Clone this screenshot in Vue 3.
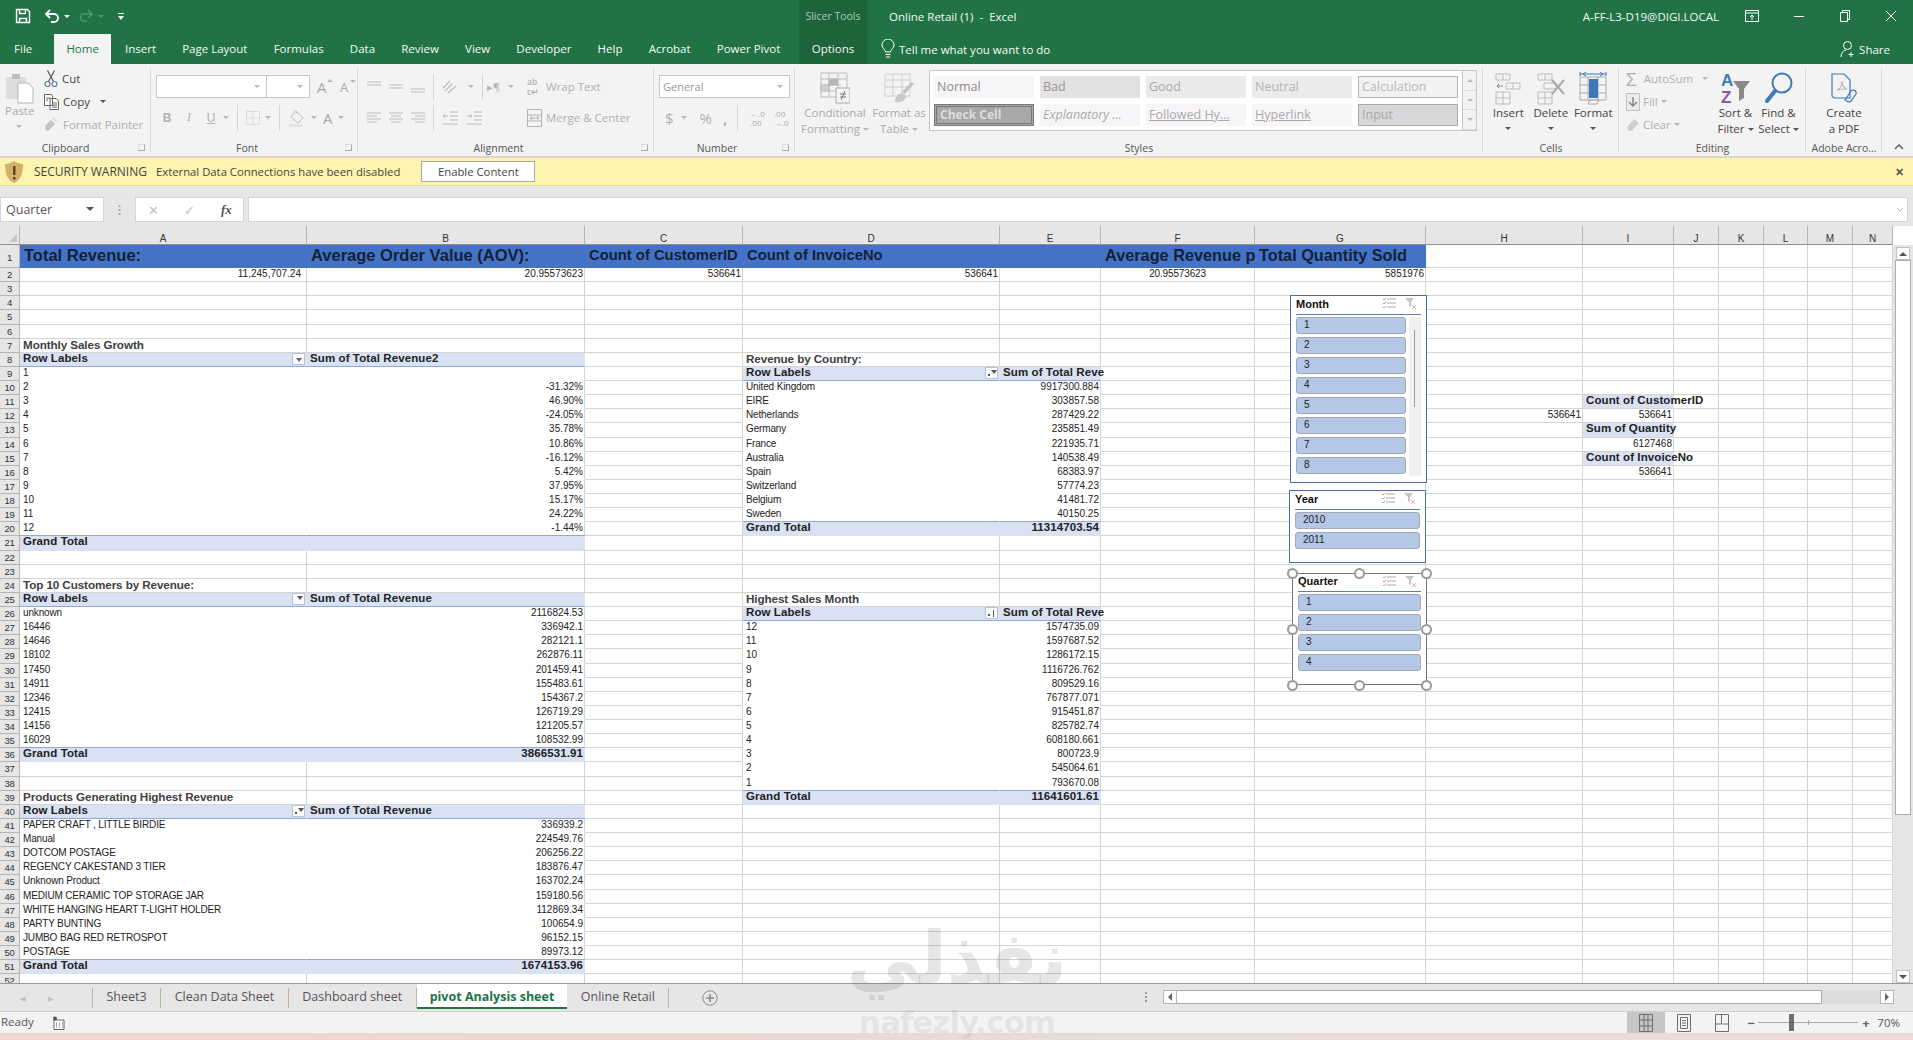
<template>
  <div class="app">
    <header class="head">
      <div class="title-row">
        <div class="qat">
          <svg class="qat-save" width="16" height="16" viewBox="0 0 16 16" fill="none" stroke="#fff" stroke-width="1.4"><path d="M1.500 1.500h11l2 2v11h-13zM4.500 1.500v4h6v-4M4.500 14.500v-4h7v4"/></svg>
          <svg class="qat-undo" width="16" height="16" viewBox="0 0 16 16" fill="none" stroke="#fff" stroke-width="1.8"><path d="M6 2 2 6l4 4M2.500 6H10a3.500 3.500 0 0 1 0 8H7"/></svg>
          <i class="tri white"></i>
          <svg class="qat-redo" width="16" height="16" viewBox="0 0 16 16" fill="none" stroke="#4f9570" stroke-width="1.6"><path d="m10 2 4 4-4 4M13.500 6H6a3.500 3.500 0 0 0 0 7h3"/></svg>
          <i class="tri dim"></i>
          <svg class="qat-more" width="8" height="9" viewBox="0 0 8 9" fill="#fff"><path d="M1 1h6v1H1zM1 4h6L4 8z"/></svg>
        </div>
        <div class="ctx-title">Slicer Tools</div>
        <div class="doc-title">Online Retail (1)&nbsp; -&nbsp; Excel</div>
        <div class="user">A-FF-L3-D19@DIGI.LOCAL</div>
        <div class="win-btns">
          <svg width="14" height="14" viewBox="0 0 14 14" fill="none" stroke="#fff"><path d="M.5 1.500h13v11H.5zM.5 4h13M7 11V6M5 8l2-2 2 2"/></svg>
          <svg width="12" height="14" viewBox="0 0 12 14" stroke="#fff"><path d="M1 7.500h10"/></svg>
          <svg width="12" height="14" viewBox="0 0 12 14" fill="none" stroke="#fff"><path d="M1.500 3.500h7v9h-7zM3.500 3.500v-2h7v9h-2"/></svg>
          <svg width="12" height="14" viewBox="0 0 12 14" stroke="#fff"><path d="m1 2 10 10M11 2 1 12"/></svg>
        </div>
      </div>
      <div class="tab-row">
        <nav class="tabs">
          <span v-for="t in ribbonTabs" :key="t" class="tab" :class="{ on: t === 'Home' }">{{ t }}</span>
        </nav>
        <span class="ctx-tab">Options</span>
        <div class="tell">
          <svg width="14" height="20" viewBox="0 0 14 20" fill="none" stroke="#fff"><path d="M4.500 13C4 10 1 9 1 6a6 6 0 0 1 12 0c0 3-3 4-3.500 7zM4.500 15.500h5M5 18h4"/></svg>
          <span>Tell me what you want to do</span>
        </div>
        <div class="share">
          <svg width="16" height="18" viewBox="0 0 16 18" fill="none" stroke="#fff"><circle cx="7.500" cy="5.500" r="4"/><path d="M1 17c0-4 2-6.500 5-7M11 12v5M8.500 14.500h5"/></svg>
          <span>Share</span>
        </div>
      </div>
    </header>

    <section class="ribbon">
      <div class="group g-clip">
        <div class="body clip-body">
          <div class="paste">
            <svg width="30" height="32" viewBox="0 0 30 32" fill="none"><path d="M1 5h20v22H1z" fill="#dcdcdc"/><path d="M7 2h8v5H7z" fill="#bdbdbd"/><path d="M13 11h10l5 5v15H13z" fill="#fff" stroke="#b5b5b5"/></svg>
            <span>Paste</span>
            <i class="tri soft"></i>
          </div>
          <div class="clip-stack">
            <div class="small">
              <svg width="14" height="18" viewBox="0 0 14 18" fill="none" stroke="#5f7ea8" stroke-width="1.200"><circle cx="3.500" cy="14" r="2.500"/><circle cx="10.500" cy="14" r="2.500"/><path stroke="#555" d="m4.500 11.500 6-11M9.500 11.500l-6-11"/></svg>
              <span>Cut</span>
            </div>
            <div class="small">
              <svg width="15" height="16" viewBox="0 0 15 16" fill="#fff" stroke="#666"><path d="M.5.500h7l1 2v9h-8zM6 4.500h6l2.500 2.500v8.500H6zM2 4h4M2 6h2M8 9h5M8 11h5M8 13h5"/></svg>
              <span>Copy</span><i class="tri dark ml6"></i>
            </div>
            <div class="small off">
              <svg width="15" height="15" viewBox="0 0 15 15" fill="#c4c4c4"><path d="m1 9 6-6 4 4-6 6-3 1z"/><path d="m8 2 2-2 1 2 3 1-2 2z" fill="#dedede"/></svg>
              <span>Format Painter</span>
            </div>
          </div>
        </div>
        <div class="label lb-clip">Clipboard<i class="launch"></i></div>
      </div>

      <div class="group g-font">
        <div class="body rows">
          <div class="line">
            <div class="combo font-name"><i class="tri soft"></i></div>
            <div class="combo font-size"><i class="tri soft"></i></div>
            <span class="grow-a big">A<i class="tri soft up"></i></span>
            <span class="grow-a">A<i class="tri soft"></i></span>
          </div>
          <div class="line l2">
            <b class="fmt">B</b>
            <em class="fmt it">I</em>
            <u class="fmt und">U</u>
            <i class="tri soft"></i>
            <i class="sep"></i>
            <svg width="14" height="14" viewBox="0 0 14 14" fill="none" stroke="#c6c6c6" stroke-dasharray="1 1"><path d="M.5.500h13v13H.5zM.5 7h13M7 .5v13"/></svg>
            <i class="tri soft"></i>
            <i class="sep"></i>
            <svg width="18" height="18" viewBox="0 0 18 18" fill="none" stroke="#bbb"><path d="m8 2 7 7-5 5-7-6zM6 1l3 3"/><path d="M1 15h14v3H1z" fill="#e4e4e4" stroke="none"/></svg>
            <i class="tri soft"></i>
            <span class="font-color">A</span>
            <i class="tri soft"></i>
          </div>
        </div>
        <div class="label lb">Font<i class="launch"></i></div>
      </div>

      <div class="group g-align">
        <div class="body align-body">
          <div class="align-grid">
            <svg v-for="a in alignTop" :key="a" width="14" height="14" viewBox="0 0 14 14" stroke="#bdbdbd"><path :d="a"/></svg>
            <i class="sep"></i>
            <svg width="18" height="16" viewBox="0 0 18 16" fill="none" stroke="#bdbdbd" stroke-width="1.200"><path d="M1 9 8 2M3 12l7-7M6 14 14 7"/></svg>
            <i class="tri soft"></i>
            <i class="sep"></i>
            <span class="para">▸¶</span>
            <i class="tri soft"></i>
          </div>
          <div class="align-grid a2">
            <svg v-for="a in alignBottom" :key="a" width="14" height="14" viewBox="0 0 14 14" stroke="#bdbdbd"><path :d="a"/></svg>
            <i class="sep"></i>
            <svg width="16" height="14" viewBox="0 0 16 14" fill="none" stroke="#bdbdbd"><path d="M8 1h8M8 5h8M8 9h8M1 13h15M6 5H1l2-2M1 5l2 2"/></svg>
            <svg width="16" height="14" viewBox="0 0 16 14" fill="none" stroke="#bdbdbd"><path d="M8 1h8M8 5h8M8 9h8M1 13h15M1 5h5L4 3M6 5 4 7"/></svg>
          </div>
          <div class="wrap-col">
            <div class="small off">
              <span class="ab">ab<br>c↵</span>
              <span>Wrap Text</span>
            </div>
            <div class="small off merge">
              <svg width="15" height="18" viewBox="0 0 15 18" fill="none" stroke="#b5b5b5"><path d="M.5.500h14v17H.5zM.5 6h14M.5 12h14M3 9h9M3 9l2-2M3 9l2 2M12 9l-2-2M12 9l-2 2"/></svg>
              <span>Merge &amp; Center</span>
            </div>
          </div>
        </div>
        <div class="label lb">Alignment<i class="launch"></i></div>
      </div>

      <div class="group g-num">
        <div class="body rows num-rows">
          <div class="line"><div class="combo general">General<i class="tri soft"></i></div></div>
          <div class="line l2 num-line">
            <span class="cur">$</span><i class="tri soft"></i>
            <span class="cur pct">%</span>
            <span class="cur cm">,</span>
            <i class="sep"></i>
            <span class="dec">←.0<br>.00</span>
            <span class="dec">.00<br>→.0</span>
          </div>
        </div>
        <div class="label lb">Number<i class="launch"></i></div>
      </div>

      <div class="group g-styles">
        <div class="body styles-body">
          <div class="big-btn off w64">
            <svg width="30" height="32" viewBox="0 0 30 32" fill="none" stroke="#bdbdbd"><path d="M1 1h26v24H1zM1 7h26M1 13h20M1 19h16M9 1v24M18 1v18" /><path d="M9 7h9v6H9z" fill="#b5b5b5"/><path d="M1 13h8v6H1z" fill="#d0d0d0"/><path d="M16 16h14v15H16z" fill="#f4f4f4" stroke="#aaa"/><path d="M20 22h6M20 25h6M25 19l-4 9" stroke="#777"/></svg>
            <span>Conditional<br>Formatting<i class="tri soft in"></i></span>
          </div>
          <div class="big-btn off w64">
            <svg width="32" height="32" viewBox="0 0 32 32" fill="none" stroke="#cfcfcf"><path d="M2 2h25v22H2zM2 8h25M2 15h25M10 2v22M19 2v22"/><path d="m31 12-9 10-3-2 9-10z" fill="#c4c4c4" stroke="none"/><path d="M12 30c0-6 4-9 8-9l3 3c-1 5-5 7-11 6z" fill="#c8c8c8" stroke="none"/></svg>
            <span>Format as<br>Table<i class="tri soft in"></i></span>
          </div>
          <div class="gallery">
            <div class="gallery-cells">
              <span v-for="s in cellStyles" :key="s.t" class="cs" :class="s.c">{{ s.t }}</span>
            </div>
            <div class="gallery-scroll">
              <span><i class="tri soft up"></i></span>
              <span><i class="tri soft"></i></span>
              <span><i class="tri soft"></i></span>
            </div>
          </div>
        </div>
        <div class="label">Styles</div>
      </div>

      <div class="group g-cells">
        <div class="body cells-body">
          <div class="big-btn w42">
            <svg width="28" height="32" viewBox="0 0 28 32" fill="none" stroke="#bdbdbd"><path d="M2 2h14v6H2zM9 2v6M2 20h14v12H2zM9 20v12M2 26h14M12 11h14v6H12zM19 11v6"/><path d="M9 14H3l2-2M3 14l2 2" stroke="#888"/></svg>
            <span>Insert</span><i class="tri dark"></i>
          </div>
          <div class="big-btn w42">
            <svg width="30" height="32" viewBox="0 0 30 32" fill="none" stroke="#bdbdbd"><path d="M2 2h14v6H2zM9 2v6M2 20h14v12H2zM9 20v12M2 26h14M8 11h12v6H8z"/><path d="m16 8 12 14M28 8 16 22" stroke="#aaa" stroke-width="2"/></svg>
            <span>Delete</span><i class="tri dark"></i>
          </div>
          <div class="big-btn w42">
            <svg width="28" height="34" viewBox="0 0 28 34" fill="none" stroke="#a8a8a8"><path d="M1 6h26v23H1zM9 6v23M19 6v23M1 14h26M1 22h26"/><path d="M10 8h9v19h-9z" fill="#3f76b5" stroke="none"/><path d="M1 3h26M1 1v4M27 1v4M4 3l3-2M4 3l3 2M24 3l-3-2M24 3l-3 2" stroke="#3f76b5"/><path d="m9 33 2-4h9l-2 4z"/></svg>
            <span>Format</span><i class="tri dark"></i>
          </div>
        </div>
        <div class="label">Cells</div>
      </div>

      <div class="group g-edit">
        <div class="body edit-body">
          <div class="edit-stack">
            <div class="small off">
              <span class="sigma">Σ</span><span>AutoSum</span><i class="tri soft ml6"></i>
            </div>
            <div class="small off">
              <svg width="14" height="18" viewBox="0 0 14 18" fill="none"><path d="M.5.500h13v17H.5z" fill="#ececec" stroke="#c0c0c0"/><path d="M7 4v9M3 9l4 4 4-4" stroke="#888" stroke-width="1.500"/></svg>
              <span>Fill</span><i class="tri soft"></i>
            </div>
            <div class="small off">
              <svg width="14" height="14" viewBox="0 0 14 14" fill="#cfcfcf"><path d="m1 9 7-8 5 4-7 8H3z"/></svg>
              <span>Clear</span><i class="tri soft"></i>
            </div>
          </div>
          <div class="big-btn w43 act">
            <svg width="32" height="34" viewBox="0 0 32 34"><text x="1" y="15" class="az a">A</text><text x="1" y="32" class="az z">Z</text><path d="M13 10h17l-6 8v9l-5 3V18z" fill="#8a8a8a"/></svg>
            <span>Sort &amp;<br>Filter<i class="tri dark in"></i></span>
          </div>
          <div class="big-btn w43 act">
            <svg width="30" height="34" viewBox="0 0 30 34" fill="none"><circle cx="18" cy="12" r="9.500" stroke="#3f7ab8" stroke-width="2"/><path d="m11 20-8 10" stroke="#3f7ab8" stroke-width="4" stroke-linecap="round"/></svg>
            <span>Find &amp;<br>Select<i class="tri dark in"></i></span>
          </div>
        </div>
        <div class="label">Editing</div>
      </div>

      <div class="group g-pdf">
        <div class="body pdf-body">
          <div class="big-btn">
            <svg width="28" height="32" viewBox="0 0 28 32" fill="none" stroke="#3f7ab8" stroke-width="1.200"><path d="M2 2h12l6 6v18H4l-2-2z"/><path d="M7 18c3-1 5-5 5-9 0 4 2 7 5 8-3 0-7 0-10 1z" stroke="#b6b6b6"/><path d="m15 28 6-9a3 3 0 0 1 5 3l-5 7a3 3 0 0 1-5-1z"/></svg>
            <span>Create<br>a PDF</span>
          </div>
        </div>
        <div class="label">Adobe Acro...</div>
      </div>
      <svg class="collapse" width="10" height="6" viewBox="0 0 10 6" fill="none" stroke="#555" stroke-width="1.300"><path d="m1 5 4-4 4 4"/></svg>
    </section>

    <section class="warning">
      <svg width="20" height="24" viewBox="0 0 20 24"><path d="M10 1c3 2 6 3 9 3 0 9-2 16-9 19C3 20 1 13 1 4c3 0 6-1 9-3z" fill="#d4b06a"/><path d="M9 6h2.500v9H9zM9 17h2.500v2.500H9z" fill="#5a4a2a"/></svg>
      <span class="warn-title">SECURITY WARNING</span>
      <span class="warn-text">External Data Connections have been disabled</span>
      <button class="enable">Enable Content</button>
      <span class="warn-close">✕</span>
    </section>

    <section class="formula">
      <div class="name-box">Quarter<i class="tri dark"></i></div>
      <div class="dots"></div>
      <div class="fx-box">
        <span class="fx-x">✕</span>
        <span class="fx-c">✓</span>
        <span class="fx-f">fx</span>
      </div>
      <div class="fx-input"><svg width="8" height="6" viewBox="0 0 8 6" fill="none" stroke="#b5b5b5"><path d="m1 1 3 3 3-3"/></svg></div>
    </section>

    <section class="sheet">
      <div class="grid">
        <div class="corner"><i></i></div>
        <div v-for="c in columns" :key="c" class="col-head">{{ c }}</div>
        <template v-for="r in rowNumbers" :key="r">
          <div class="row-head" :class="{ first: r === 1 }">{{ r }}</div>
          <div v-for="c in columns" :key="c + r" class="cell" :class="cellAt(c, r).cls">
            <span v-if="cellAt(c, r).text">{{ cellAt(c, r).text }}</span>
            <span v-if="cellAt(c, r).btn" class="pv-btn" :class="cellAt(c, r).btn"></span>
          </div>
        </template>
      </div>

      <div class="vscroll">
        <span class="vb"><i class="tri dark up"></i></span>
        <span class="v-thumb"></span>
        <span class="vb"><i class="tri dark"></i></span>
      </div>

      <div v-for="s in slicers" :key="s.name" class="slicer" :class="s.cls">
        <div class="sl-head">
          <b>{{ s.name }}</b>
          <svg width="14" height="13" viewBox="0 0 14 13" fill="none" stroke="#a9a9a9"><path d="M5 2h9M5 6h9M5 10h9M1 2l1 1 2-2M1 6l1 1 2-2M1 10l1 1 2-2"/></svg>
          <svg class="sl-clear" width="12" height="13" viewBox="0 0 12 13"><path d="M0 1h9L6 5v5L4 9V5z" fill="#c5c5c5"/><path d="m7 8 4 4m0-4-4 4" stroke="#e0b0b0"/></svg>
        </div>
        <div class="sl-list">
          <div class="sl-items">
            <div v-for="i in s.items" :key="i" class="sl-item">{{ i }}</div>
          </div>
          <div v-if="s.scroll" class="sl-scroll"><i></i></div>
        </div>
      </div>
      <i v-for="h in handles" :key="h" class="handle" :class="h"></i>
    </section>

    <section class="sheet-tabs">
      <span class="nav-a">◂</span><span class="nav-a">▸</span>
      <div class="sheets">
        <span v-for="t in sheetTabs" :key="t" class="s-tab" :class="{ on: t === 'pivot Analysis sheet' }">{{ t }}</span>
      </div>
      <svg class="add" width="16" height="16" viewBox="0 0 16 16" fill="none" stroke="#8c8c8c"><circle cx="8" cy="8" r="7.200"/><path stroke-width="1.600" d="M8 4v8M4 8h8"/></svg>
      <div class="hscroll">
        <span class="hb"><i class="tri-l"></i></span>
        <span class="h-thumb"></span>
        <span class="h-track"></span>
        <span class="hb"><i class="tri-r"></i></span>
      </div>
    </section>

    <footer class="status">
      <span>Ready</span>
      <svg width="14" height="14" viewBox="0 0 14 14" fill="none" stroke="#666"><path d="M3 4h10v9.500H3z" fill="#fff"/><path d="M5 7h1M8 7h1M11 7h1M5 9h1M8 9h1M11 9h1M5 11h1M8 11h1M11 11h1"/><circle cx="4" cy="2.500" r="2" fill="#555" stroke="none"/></svg>
      <div class="views">
        <span class="view on"><svg width="14" height="18" viewBox="0 0 14 18" fill="none" stroke="#6e6e6e"><path d="M.5.500h13v17H.5zM.5 6h13M.5 12h13M5 .5v17M9 .5v17"/></svg></span>
        <span class="view"><svg width="14" height="18" viewBox="0 0 14 18" fill="none" stroke="#6e6e6e"><path d="M.5.500h13v17H.5zM3.500 3.500h7v11h-7zM5 6.500h4M5 9h4M5 11.500h4"/></svg></span>
        <span class="view"><svg width="14" height="18" viewBox="0 0 14 18" fill="none" stroke="#6e6e6e"><path d="M.5.500h13v17H.5zM.5 10h6V.5M7.500 10h6"/></svg></span>
      </div>
      <div class="zoom">
        <b>−</b>
        <span class="z-track"><i class="z-tick"></i><i class="z-knob"></i></span>
        <b>+</b>
        <span class="z-val">70%</span>
      </div>
    </footer>
    <div class="desk"></div>

    <div class="mark">
      <span class="mark-ar">نفذلي</span>
      <span class="mark-en">nafezly.com</span>
    </div>
  </div>
</template>

<script setup>
const ribbonTabs = ['File', 'Home', 'Insert', 'Page Layout', 'Formulas', 'Data', 'Review', 'View', 'Developer', 'Help', 'Acrobat', 'Power Pivot']
const sheetTabs = ['Sheet3', 'Clean Data Sheet', 'Dashboard sheet', 'pivot Analysis sheet', 'Online Retail']

const alignTop = ['M0 2h14M0 5h14', 'M0 5h14M0 8h14', 'M0 9h14M0 12h14']
const alignBottom = ['M0 2h14M0 5h10M0 8h14M0 11h10', 'M0 2h14M2 5h10M0 8h14M2 11h10', 'M0 2h14M4 5h10M0 8h14M4 11h10']

const cellStyles = [
  { t: 'Normal', c: 'normal' }, { t: 'Bad', c: 'bad' }, { t: 'Good', c: 'good' }, { t: 'Neutral', c: 'neutral' }, { t: 'Calculation', c: 'calc' },
  { t: 'Check Cell', c: 'check' }, { t: 'Explanatory ...', c: 'expl' }, { t: 'Followed Hy...', c: 'link' }, { t: 'Hyperlink', c: 'link' }, { t: 'Input', c: 'input' },
]

const columns = ['A', 'B', 'C', 'D', 'E', 'F', 'G', 'H', 'I', 'J', 'K', 'L', 'M', 'N']
const rowNumbers = Array.from({ length: 52 }, (_, i) => i + 1)

const cells = {}
const EMPTY = { text: '', cls: '' }

function put(col, row, text, cls = '', btn = '') {
  cells[col + row] = { text, cls, btn }
}

// one pivot table: title row, header row, body rows, grand total
function pivot(c1, c2, top, title, head, btn, rows, total, clip = '') {
  put(c1, top, title, 'title')
  put(c1, top + 1, 'Row Labels', 'band pv-head bold left-of', btn)
  put(c2, top + 1, head, 'band pv-head bold ' + clip)
  rows.forEach(([label, value], i) => {
    const last = i === rows.length - 1 ? ' lastrow' : ''
    put(c1, top + 2 + i, label, 'nogrid left-of' + last)
    put(c2, top + 2 + i, value, 'nogrid right' + last)
  })
  const end = top + 2 + rows.length
  put(c1, end, 'Grand Total', 'band bold left-of')
  put(c2, end, total, 'band bold right')
}

;['Total Revenue:', 'Average Order Value (AOV):', 'Count of CustomerID', 'Count of InvoiceNo', '', 'Average Revenue p', 'Total Quantity Sold'].forEach((t, i) => {
  const size = i < 2 ? ' xl' : i > 4 ? ' lg' : ''
  put(columns[i], 1, t, 'blue' + size)
})
put('A', 2, '11,245,707.24', 'right pad')
put('B', 2, '20.95573623', 'right')
put('C', 2, '536641', 'right')
put('D', 2, '536641', 'right')
put('F', 2, '20.95573623', 'center')
put('G', 2, '5851976', 'right')

pivot('A', 'B', 7, 'Monthly Sales Growth', 'Sum of Total Revenue2', 'caret', [
  ['1', ''], ['2', '-31.32%'], ['3', '46.90%'], ['4', '-24.05%'], ['5', '35.78%'], ['6', '10.86%'],
  ['7', '-16.12%'], ['8', '5.42%'], ['9', '37.95%'], ['10', '15.17%'], ['11', '24.22%'], ['12', '-1.44%'],
], '')

pivot('A', 'B', 24, 'Top 10 Customers by Revenue:', 'Sum of Total Revenue', 'filter', [
  ['unknown', '2116824.53'], ['16446', '336942.1'], ['14646', '282121.1'], ['18102', '262876.11'], ['17450', '201459.41'],
  ['14911', '155483.61'], ['12346', '154367.2'], ['12415', '126719.29'], ['14156', '121205.57'], ['16029', '108532.99'],
], '3866531.91')

pivot('A', 'B', 39, 'Products Generating Highest Revenue', 'Sum of Total Revenue', 'sort', [
  ['PAPER CRAFT , LITTLE BIRDIE', '336939.2'], ['Manual', '224549.76'], ['DOTCOM POSTAGE', '206256.22'], ['REGENCY CAKESTAND 3 TIER', '183876.47'],
  ['Unknown Product', '163702.24'], ['MEDIUM CERAMIC TOP STORAGE JAR', '159180.56'], ['WHITE HANGING HEART T-LIGHT HOLDER', '112869.34'],
  ['PARTY BUNTING', '100654.9'], ['JUMBO BAG RED RETROSPOT', '96152.15'], ['POSTAGE', '89973.12'],
], '1674153.96')

pivot('D', 'E', 8, 'Revenue by Country:', 'Sum of Total Reve', 'sort', [
  ['United Kingdom', '9917300.884'], ['EIRE', '303857.58'], ['Netherlands', '287429.22'], ['Germany', '235851.49'], ['France', '221935.71'],
  ['Australia', '140538.49'], ['Spain', '68383.97'], ['Switzerland', '57774.23'], ['Belgium', '41481.72'], ['Sweden', '40150.25'],
], '11314703.54', 'tight')

pivot('D', 'E', 25, 'Highest Sales Month', 'Sum of Total Reve', 'sortb', [
  ['12', '1574735.09'], ['11', '1597687.52'], ['10', '1286172.15'], ['9', '1116726.762'], ['8', '809529.16'], ['7', '767877.071'],
  ['6', '915451.87'], ['5', '825782.74'], ['4', '608180.661'], ['3', '800723.9'], ['2', '545064.61'], ['1', '793670.08'],
], '11641601.61', 'tight')

put('I', 11, 'Count of CustomerID', 'band-s bold')
put('H', 12, '536641', 'right')
put('I', 12, '536641', 'right')
put('I', 13, 'Sum of Quantity', 'band-s bold')
put('I', 14, '6127468', 'right')
put('I', 15, 'Count of InvoiceNo', 'band-s bold')
put('I', 16, '536641', 'right')

function cellAt(col, row) {
  return cells[col + row] || EMPTY
}

const slicers = [
  { name: 'Month', cls: 's-month', items: [1, 2, 3, 4, 5, 6, 7, 8], scroll: true },
  { name: 'Year', cls: 's-year', items: [2010, 2011] },
  { name: 'Quarter', cls: 's-quarter', items: [1, 2, 3, 4] },
]
const handles = ['h-tl', 'h-tm', 'h-tr', 'h-ml', 'h-mr', 'h-bl', 'h-bm', 'h-br']
</script>

<style>
html, body { margin: 0; background: #e6e6e6; overflow: hidden; }
</style>

<style scoped>
.app {
  position: relative;
  width: 1913px;
  height: 1040px;
  overflow: hidden;
  font-family: "Open Sans", "Noto Sans", sans-serif;
  font-size: 12px;
  color: #444;
  background: #e6e6e6;
}

/* little triangles used all over the ribbon */
.tri {
  display: inline-block;
  width: 0;
  height: 0;
  border-left: 3px solid transparent;
  border-right: 3px solid transparent;
  border-top: 3px solid #666;
}
.tri.white { border-top-color: #fff; }
.tri.dim { border-top-color: #4f9570; }
.tri.soft { border-top-color: #b8b8b8; }
.tri.dark { border-top-color: #555; }
.tri.up { border-top: 0; border-bottom: 3px solid #b8b8b8; }
.tri.dark.up { border-bottom-color: #555; }
.tri.in { margin-left: 3px; vertical-align: middle; }
.ml6 { margin-left: 6px; }

.head { background: #217346; color: #fff; height: 64px; }
.title-row { display: flex; height: 34px; align-items: center; padding-bottom: 2px; box-sizing: border-box; }
.qat { width: 799px; height: 32px; display: flex; align-items: center; padding-left: 15px; box-sizing: border-box; }
.qat-undo { margin-left: 13px; }
.qat-undo + .tri { margin-left: 4px; }
.qat-redo { margin-left: 8px; }
.qat-redo + .tri { margin-left: 4px; }
.qat-more { margin-left: 13px; }
.ctx-title { width: 68px; height: 34px; margin-bottom: -2px; line-height: 32px; text-align: center; background: #1d6439; color: #a9cdb9; font-size: 10.500px; }
.doc-title { margin-left: 22px; font-size: 11.500px; color: #f2f7f4; }
.user { margin-left: auto; font-size: 11.500px; color: #f2f7f4; }
.win-btns { display: flex; align-items: center; gap: 34px; margin-left: 26px; padding-right: 16px; }

.tab-row { display: flex; height: 30px; align-items: stretch; }
.tabs { width: 799px; flex: none; display: flex; align-items: stretch; padding-left: 1px; box-sizing: border-box; }
.tab { flex: none; padding: 0 13.100px; line-height: 29px; color: #f4f8f5; font-size: 11.500px; white-space: nowrap; }
.tab.on { margin: 0 1px 0 9px; padding: 0 12px; background: #f3f3f3; color: #217346; }
.ctx-tab { width: 68px; flex: none; text-align: center; line-height: 29px; background: #1d6439; color: #f4f8f5; font-size: 11.500px; }
.tell { margin-left: 14px; display: flex; align-items: center; gap: 4px; font-size: 11.500px; color: #f4f8f5; }
.share { margin-left: auto; display: flex; align-items: center; gap: 3px; padding-right: 23px; font-size: 11.500px; color: #f4f8f5; }

.ribbon { position: relative; display: flex; height: 92px; background: #f3f3f3; border-bottom: 2px solid #dcd6c4; }
.group { position: relative; display: flex; flex-direction: column; height: 92px; box-sizing: border-box; flex: none; }
.group::after { content: ""; position: absolute; right: 0; top: 4px; bottom: 4px; width: 1px; background: #d8d8d8; }
.body { height: 76px; box-sizing: border-box; }
.label { position: relative; height: 16px; line-height: 16px; text-align: center; font-size: 10.500px; color: #555; }
.label.lb { padding-right: 15px; }
.label.lb-clip { padding-right: 20px; }
.launch { position: absolute; right: 6px; top: 4px; width: 5px; height: 5px; border: 1px solid #aaa; border-top-color: #ddd; border-left-color: #ddd; }
.g-clip { width: 151px; }
.g-font { width: 207px; }
.g-align { width: 296px; }
.g-num { width: 141px; }
.g-styles { width: 688px; }
.g-cells { width: 136px; }
.g-edit { width: 187px; }
.g-pdf { width: 76px; }
.collapse { position: absolute; right: 9px; top: 80px; }

.small { display: flex; align-items: center; gap: 4px; height: 23px; font-size: 11.500px; color: #444; white-space: nowrap; }
.small.off { color: #b0b0b0; }
.clip-body { display: flex; padding: 3px 0 0 5px; }
.paste { width: 39px; padding-top: 5px; display: flex; flex-direction: column; align-items: flex-start; color: #aaa; font-size: 11.500px; }
.paste span { line-height: 16px; margin-top: -1px; }
.paste .tri { margin: 6px 0 0 11px; }
.clip-stack .small { width: 100px; }

.rows { padding: 11px 0 0 5px; display: flex; flex-direction: column; gap: 8px; }
.line { display: flex; align-items: center; height: 23px; }
.combo { position: relative; height: 23px; box-sizing: border-box; background: #fff; border: 1px solid #c6c6c6; font-size: 11px; color: #999; line-height: 21px; padding-left: 3px; }
.combo .tri { position: absolute; right: 6px; top: 9px; }
.font-name { width: 111px; }
.font-size { width: 43px; border-left: 0; }
.grow-a { position: relative; margin-left: 7px; font-size: 13px; color: #aaa; width: 16px; }
.grow-a.big { font-size: 15px; }
.grow-a .tri { position: absolute; right: 0; top: 2px; }
.l2 { gap: 5px; padding-left: 4px; }
.fmt { width: 14px; text-align: center; color: #b0b0b0; font-size: 12px; font-family: "Liberation Sans", sans-serif; }
.fmt.it { font-family: "Liberation Serif", serif; margin-left: 3px; }
.und { margin-left: 3px; }
.sep { display: block; width: 1px; height: 26px; background: #d5d5d5; margin: 0 3px; flex: none; }
.font-color { color: #aaa; font-size: 15px; margin-left: 1px; }

.align-body { display: grid; grid-template-columns: 160px 1fr; grid-template-rows: 23px 23px; row-gap: 8px; padding: 11px 0 0 9px; }
.align-grid { display: flex; align-items: center; gap: 8px; }
.align-grid .sep { margin: 0; }
.para { color: #b5b5b5; font-size: 11px; margin-left: -4px; }
.wrap-col { grid-column: 2; grid-row: 1 / 3; display: flex; flex-direction: column; gap: 8px; }
.ab { min-width: 15px; font-size: 8.500px; line-height: 10px; color: #b0b0b0; font-weight: 600; }

.num-rows { padding-left: 5px; }
.general { width: 131px; }
.num-line { padding-left: 6px; gap: 7px; }
.cur { font-size: 15px; color: #b0b0b0; }
.pct { margin-left: 6px; }
.cm { font-weight: 700; margin-left: 4px; }
.dec { font-size: 8px; line-height: 9px; color: #aaa; margin-left: 2px; }

.big-btn { display: flex; flex-direction: column; align-items: center; padding-top: 7px; box-sizing: border-box; text-align: center; color: #444; font-size: 11.500px; line-height: 16px; flex: none; white-space: nowrap; }
.big-btn svg { height: 34px; flex: none; }
.big-btn.off { color: #aaa; }
.big-btn > .tri { margin-top: 6px; }
.w64 { width: 64px; }
.w42 { width: 42.500px; }
.w43 { width: 43px; }

.styles-body { display: flex; padding-left: 8px; }
.gallery { display: flex; height: 61px; margin: 6px 0 0 -2px; box-sizing: border-box; border: 1px solid #c6c6c6; background: #fff; }
.gallery-cells { display: grid; grid-template-columns: repeat(5, 100px); grid-auto-rows: 22px; gap: 6px; padding: 5px 4px; width: 532px; box-sizing: border-box; }
.gallery-scroll { width: 13px; display: flex; flex-direction: column; border-left: 1px solid #c6c6c6; background: #f3f3f3; }
.gallery-scroll span { flex: 1; display: flex; align-items: center; justify-content: center; border-bottom: 1px solid #ddd; }
.cs { box-sizing: border-box; padding-left: 3px; line-height: 22px; font-size: 12.500px; color: #aaa; white-space: nowrap; }
.cs.normal { background: #f8f5f8; color: #8a8a8a; }
.cs.bad { background: #e3e1e2; color: #999; }
.cs.good { background: #ebe9ea; color: #aaa; }
.cs.neutral { background: #eceaeb; color: #b5b5b5; }
.cs.calc { background: #f3f2f3; border: 1px solid #b5b5b5; line-height: 20px; color: #b8b8b8; }
.cs.check { background: #a8a8a8; border: 3px double #777; line-height: 16px; color: #ddd; font-weight: 700; font-size: 12px; }
.cs.expl { background: #f8f5f8; font-style: italic; }
.cs.link { background: #f8f5f8; text-decoration: underline; }
.cs.input { background: #dad7da; border: 1px solid #aaa; line-height: 20px; color: #aaa; }

.cells-body { display: flex; padding-left: 4px; }
.edit-body { display: flex; padding: 3px 0 0 7px; }
.edit-stack { width: 88px; }
.edit-stack .small { gap: 3px; }
.sigma { font-size: 19px; color: #b0b0b0; line-height: 18px; margin-right: 4px; }
.act { padding-top: 4px; }
.az { font: 700 17px "Liberation Sans", sans-serif; }
.az.a { fill: #3f7ab8; }
.az.z { fill: #8a5aa0; }
.pdf-body { display: flex; justify-content: center; }
.pdf-body .big-btn { width: 76px; }

.warning { display: flex; align-items: center; height: 27px; background: #fdf4b0; border-bottom: 1px solid #e4d99c; padding-left: 4px; font-size: 11.300px; color: #444; }
.warn-title { margin-left: 10px; font-size: 12px; }
.warn-text { margin-left: 9px; }
.enable { width: 114px; height: 21px; margin-left: 21px; padding: 0; background: #fff; border: 1px solid #a8a8a8; font: inherit; color: #444; }
.warn-close { margin-left: auto; padding-right: 9px; font-size: 11px; color: #555; font-weight: 700; }

.formula { display: flex; align-items: center; height: 40px; padding-top: 7px; box-sizing: border-box; }
.name-box { position: relative; width: 104px; height: 25px; box-sizing: border-box; background: #fff; border: 1px solid #d4d4d4; padding-left: 5px; line-height: 23px; font-size: 12.500px; color: #555; }
.name-box .tri { position: absolute; right: 9px; top: 9px; border-left-width: 4px; border-right-width: 4px; border-top-width: 4px; }
.dots { width: 31px; height: 11px; background: radial-gradient(circle, #aaa 1px, transparent 1.200px) center top / 3px 4px repeat-y; }
.fx-box { width: 109px; height: 25px; box-sizing: border-box; background: #fff; border: 1px solid #d4d4d4; display: flex; align-items: center; padding-left: 12px; gap: 25px; }
.fx-x { color: #c0c0c0; font-size: 13px; }
.fx-c { color: #c0c0c0; font-size: 13px; }
.fx-f { font: italic 700 13px "Liberation Serif", serif; color: #555; margin-left: 1px; }
.fx-input { flex: 1; height: 25px; margin: 0 5px 0 4px; box-sizing: border-box; background: #fff; border: 1px solid #d4d4d4; display: flex; align-items: center; justify-content: flex-end; padding-right: 3px; }

.sheet { position: relative; height: 757px; overflow: hidden; background: #fff; }
.grid {
  display: grid;
  grid-template-columns: 20px 287px 278px 158px 257px 101px 154px 171px 157px 91px 45px 45px 44px 45px 40px;
  grid-template-rows: 19px 23px repeat(51, 14.130px);
  width: 1893px;
  font-family: "Liberation Sans", Arial, sans-serif;
  font-size: 10px;
  color: #222;
}
.corner { background: #e6e6e6; border-right: 1px solid #b5b5b5; border-bottom: 1px solid #8f8f8f; position: relative; }
.corner i { position: absolute; right: 2px; bottom: 2px; width: 0; height: 0; border-left: 8px solid transparent; border-bottom: 8px solid #c6c6c6; }
.col-head { background: #e6e6e6; border-right: 1px solid #b5b5b5; border-bottom: 1px solid #8f8f8f; text-align: center; line-height: 26px; height: 19px; overflow: hidden; box-sizing: border-box; font-size: 10px; color: #333; }
.row-head { background: #e6e6e6; border-right: 1px solid #b5b5b5; border-bottom: 1px solid #b5b5b5; text-align: center; line-height: 14px; font-size: 9.500px; color: #333; letter-spacing: -0.300px; box-sizing: border-box; overflow: hidden; }
.row-head.first { line-height: 26px; }
.cell { position: relative; box-sizing: border-box; border-right: 1px solid #d4d4d4; border-bottom: 1px solid #d4d4d4; padding: 0 3px; line-height: 12px; white-space: nowrap; letter-spacing: -0.150px; min-width: 0; }
.cell.right { text-align: right; padding-right: 1px; letter-spacing: 0; }
.cell.right.pad { padding-right: 5px; }
.cell.center { text-align: center; }
.cell.tight { letter-spacing: -0.100px; padding-right: 0; }
.cell.bold { font-weight: 700; font-size: 11.500px; letter-spacing: 0.100px; line-height: 11px; }
.cell.title { font-weight: 700; font-size: 11.700px; color: #404040; letter-spacing: -0.100px; line-height: 12px; }
.cell.nogrid { border-color: transparent; }
.cell.lastrow { border-bottom-color: #8ea9db; }
.cell.left-of { border-right-color: transparent; }
.cell.nogrid.right { border-right-color: #d4d4d4; }
.cell.band { background: #d9e1f2; border-color: #d9e1f2; }
.cell.pv-head { border-bottom-color: #8ea9db; }
.cell.band-s { background: #d9e1f2; border-right-color: #d9e1f2; }
.cell.blue { background: #4472c4; border-color: #4472c4; font-weight: 700; font-size: 14.800px; line-height: 21px; color: #14213a; letter-spacing: 0; padding-left: 4px; }
.cell.blue.xl { font-size: 16.500px; }
.cell.blue.lg { font-size: 16.300px; }
.pv-btn { position: absolute; right: 1px; top: 0; width: 13px; height: 12px; box-sizing: border-box; background: #fbfbfb; border: 1px solid #b9c3d6; }
.pv-btn::before { content: ""; position: absolute; left: 3px; top: 4px; border-left: 3px solid transparent; border-right: 3px solid transparent; border-top: 4px solid #666; }
.pv-btn.filter::before { left: 4px; top: 2px; border-top-color: #555; }
.pv-btn.sort::before { left: 5px; top: 2px; border-top-color: #555; }
.pv-btn.sort::after, .pv-btn.sortb::after { content: ""; position: absolute; left: 2px; bottom: 2px; width: 2px; height: 2px; background: #555; }
.pv-btn.sortb::before { left: 7px; top: 2px; border: 0; width: 1px; height: 7px; background: #555; }

.vscroll { position: absolute; left: 1893px; top: 19px; right: 0; bottom: 0; display: flex; flex-direction: column; align-items: center; padding-top: 2px; box-sizing: border-box; background: #e6e6e6; }
.vb { width: 14px; height: 13px; flex: none; box-sizing: border-box; background: #fff; border: 1px solid #c0c0c0; display: flex; align-items: center; justify-content: center; }
.vb .tri { border-left-width: 4px; border-right-width: 4px; border-top-width: 4px; }
.vb .tri.up { border-top-width: 0; border-bottom-width: 4px; }
.v-thumb { width: 16px; height: 555px; margin-bottom: auto; box-sizing: border-box; background: #fff; border: 1px solid #ababab; }

.slicer { position: absolute; box-sizing: border-box; background: #fff; border: 1px solid #4a6ea9; padding: 0 5px; font-family: "Liberation Sans", Arial, sans-serif; font-size: 10px; color: #222; }
.sl-head { display: flex; align-items: center; height: 19px; padding-bottom: 3px; box-sizing: border-box; border-bottom: 1px solid #5f7fb3; }
.sl-head b { flex: 1; font-size: 11px; color: #111; }
.sl-clear { margin: 0 4px 0 9px; }
.sl-list { display: flex; margin-top: 2px; }
.sl-items { flex: 1; display: flex; flex-direction: column; gap: 3px; }
.sl-item { height: 17px; box-sizing: border-box; line-height: 14px; padding-left: 7px; background: #b4c7e7; border: 1px solid #a2a8b4; border-radius: 3px; }
.sl-scroll { position: relative; width: 12px; margin-left: 3px; background: #f1f1f1; }
.sl-scroll i { position: absolute; left: 5px; top: 13px; width: 1px; height: 77px; background: #9a9a9a; }
.s-month { left: 1290px; top: 69px; width: 137px; height: 188px; }
.s-month .sl-scroll { height: 159px; }
.s-year { left: 1289px; top: 264px; width: 137px; height: 73px; }
.s-quarter { left: 1292px; top: 347px; width: 135px; height: 112px; border-color: #777; }
.s-quarter .sl-head { height: 18px; }
.handle { position: absolute; width: 11px; height: 11px; box-sizing: border-box; margin: -5px 0 0 -5px; background: #fff; border: 2px solid #9a9a9a; border-radius: 50%; }
.h-tl { left: 1292px; top: 347px; }
.h-tm { left: 1359px; top: 347px; }
.h-tr { left: 1426px; top: 347px; }
.h-ml { left: 1292px; top: 403px; }
.h-mr { left: 1426px; top: 403px; }
.h-bl { left: 1292px; top: 459px; }
.h-bm { left: 1359px; top: 459px; }
.h-br { left: 1426px; top: 459px; }

.sheet-tabs { position: relative; display: flex; align-items: center; height: 28px; background: #e6e6e6; border-top: 1px solid #9a9a9a; box-sizing: border-box; color: #555; }
.nav-a { width: 14px; text-align: center; color: #c0c0c0; font-size: 11px; margin-left: 16px; }
.nav-a + .nav-a { margin-left: 10px; width: 22px; }
.sheets { display: flex; align-items: stretch; margin-left: 30px; border-left: 1px solid #b5b5b5; height: 20px; }
.s-tab { padding: 0 13.500px; line-height: 17px; border-right: 1px solid #b5b5b5; font-size: 12.500px; color: #555; }
.s-tab.on { height: 25px; margin-top: -4px; line-height: 26px; box-sizing: border-box; background: #fff; color: #217346; font-weight: 700; border-right: 0; border-bottom: 2px solid #217346; padding: 0 13px; }
.add { margin-left: 33px; }
.hscroll { position: absolute; left: 1163px; top: 6px; display: flex; width: 731px; height: 14px; }
.hb { width: 14px; box-sizing: border-box; background: #fff; border: 1px solid #b5b5b5; display: flex; align-items: center; justify-content: center; }
.tri-l { border-top: 4px solid transparent; border-bottom: 4px solid transparent; border-right: 4px solid #666; }
.tri-r { border-top: 4px solid transparent; border-bottom: 4px solid transparent; border-left: 4px solid #666; }
.h-thumb { width: 645px; box-sizing: border-box; background: #fff; border: 1px solid #ababab; border-left: 0; }
.h-track { flex: 1; background: #dcdcdc; }
.hscroll::before { content: ""; position: absolute; left: -18px; top: 1px; width: 2px; height: 12px; background: radial-gradient(circle, #999 1px, transparent 1.200px) center top / 2px 4px repeat-y; }

.status { display: flex; align-items: center; gap: 17px; height: 22px; padding: 0 0 0 1px; background: #f3f3f3; border-top: 1px solid #cfcfcf; box-sizing: border-box; font-size: 11.500px; color: #555; }
.status > span { margin-top: -3px; }
.views { display: flex; margin-left: auto; height: 100%; }
.view { width: 38px; display: flex; align-items: center; justify-content: center; }
.view.on { background: #c6c6c6; }
.zoom { display: flex; align-items: center; height: 100%; padding-right: 13px; gap: 4px; margin-left: -11px; }
.zoom b { font-size: 13px; color: #666; width: 7px; text-align: center; }
.z-track { position: relative; width: 100px; height: 1px; background: #a8a8a8; }
.z-tick { position: absolute; left: 50px; top: -2px; width: 1px; height: 5px; background: #a8a8a8; }
.z-knob { position: absolute; left: 31px; top: -8px; width: 5px; height: 17px; background: #6e6e6e; }
.z-val { margin-left: 4px; }
.desk { height: 8px; background: linear-gradient(90deg, #efd9ce, #ead8d2 40%, #e6dcd8 60%, #efdbd6); }

.mark { position: absolute; left: 850px; top: 918px; width: 214px; display: flex; flex-direction: column; align-items: center; pointer-events: none; color: rgba(90, 90, 90, 0.15); line-height: 1; }
.mark-ar { font: 700 72px "DejaVu Sans", sans-serif; height: 80px; line-height: 80px; white-space: nowrap; }
.mark-en { font: 700 31px "DejaVu Sans", sans-serif; margin-top: 6px; letter-spacing: -1px; color: rgba(90, 90, 90, 0.1); }
</style>
